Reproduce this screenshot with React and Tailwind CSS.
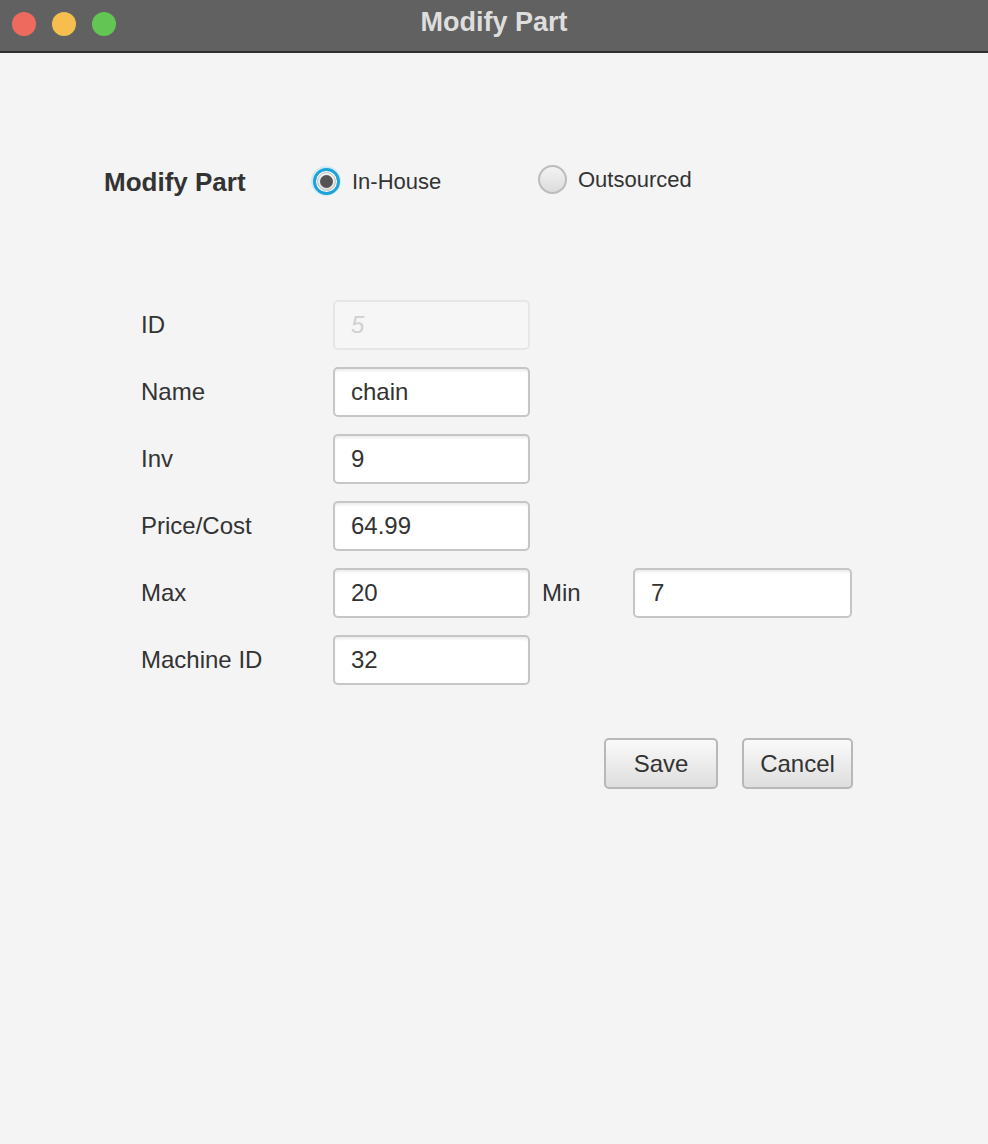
import React, { useState } from 'react';

const font = "font-['Liberation_Sans',Arial,sans-serif]";

const Field = ({ value, width = 'w-[197px]', disabled = false }) => (
  <div
    className={`${width} h-[50px] rounded-[5px] border-2 flex items-center pl-[16px] text-[24px] ${
      disabled
        ? 'border-[#e6e6e6] bg-[#f6f6f6] text-[#d0d0d0] italic'
        : 'border-[#c6c6c6] bg-white text-[#333] shadow-[inset_0_3px_3px_-1px_rgba(0,0,0,0.08)]'
    }`}
  >
    {value}
  </div>
);

const Row = ({ label, children }) => (
  <div className="flex items-center h-[50px]">
    <div className="w-[192px] text-[24px] text-[#333]">{label}</div>
    {children}
  </div>
);

const Radio = ({ checked }) =>
  checked ? (
    <span className="w-[30px] h-[30px] rounded-full bg-[#cfe9f5] flex items-center justify-center">
      <span className="w-[27px] h-[27px] rounded-full border-[3px] border-[#1ea2da] bg-white flex items-center justify-center">
        <span className="w-[19px] h-[19px] rounded-full border border-[#bdbdbd] bg-gradient-to-b from-[#f2f2f2] to-[#dedede] flex items-center justify-center">
          <span className="w-[13px] h-[13px] rounded-full bg-[#545454]" />
        </span>
      </span>
    </span>
  ) : (
    <span className="w-[29px] h-[29px] rounded-full border-2 border-[#bcbcbc] bg-gradient-to-b from-[#f3f3f3] to-[#dcdcdc]" />
  );

const Button = ({ children, width }) => (
  <button
    className={`${width} h-[51px] rounded-[5px] border-2 border-[#b8b8b8] bg-gradient-to-b from-[#fafafa] to-[#dedede] text-[24px] text-[#333] flex items-center justify-center`}
  >
    {children}
  </button>
);

export default function App() {
  const [type, setType] = useState('inhouse');

  return (
    <div className={`w-[988px] h-[1144px] flex flex-col bg-[#f4f4f4] ${font}`}>
      {/* title bar */}
      <div className="h-[53px] bg-[#616161] border-b-2 border-[#2e2e2e] flex items-center relative">
        <div className="flex items-center gap-[16px] pl-[12px] -mt-[4px]">
          <span className="w-[24px] h-[24px] rounded-full bg-[#ee6a5f]" />
          <span className="w-[24px] h-[24px] rounded-full bg-[#f5be4f]" />
          <span className="w-[24px] h-[24px] rounded-full bg-[#62c554]" />
        </div>
        <div className="absolute inset-0 flex items-center justify-center pb-[7px] text-[27px] font-bold text-[#dedede]">
          Modify Part
        </div>
      </div>

      {/* heading + radios */}
      <div className="flex items-center h-[32px] mt-[112px] pl-[104px]">
        <div className="w-[207px] text-[26px] font-bold text-[#333] pt-[3px]">Modify Part</div>
        <div className="w-[227px] flex items-center gap-[11px] cursor-pointer" onClick={() => setType('inhouse')}>
          <Radio checked={type === 'inhouse'} />
          <span className="text-[22px] text-[#333]">In-House</span>
        </div>
        <div className="flex items-center gap-[11px] cursor-pointer -mt-[3px]" onClick={() => setType('outsourced')}>
          <Radio checked={type === 'outsourced'} />
          <span className="text-[22px] text-[#333]">Outsourced</span>
        </div>
      </div>

      {/* form */}
      <div className="flex flex-col gap-[17px] mt-[103px] pl-[141px]">
        <Row label="ID">
          <Field value="5" disabled />
        </Row>
        <Row label="Name">
          <Field value="chain" />
        </Row>
        <Row label="Inv">
          <Field value="9" />
        </Row>
        <Row label="Price/Cost">
          <Field value="64.99" />
        </Row>
        <Row label="Max">
          <Field value="20" />
          <div className="w-[103px] pl-[12px] text-[24px] text-[#333]">Min</div>
          <Field value="7" width="w-[219px]" />
        </Row>
        <Row label={type === 'inhouse' ? 'Machine ID' : 'Company Name'}>
          <Field value="32" />
        </Row>
      </div>

      {/* buttons */}
      <div className="flex gap-[24px] mt-[53px] pl-[604px]">
        <Button width="w-[114px]">Save</Button>
        <Button width="w-[111px]">Cancel</Button>
      </div>
    </div>
  );
}
